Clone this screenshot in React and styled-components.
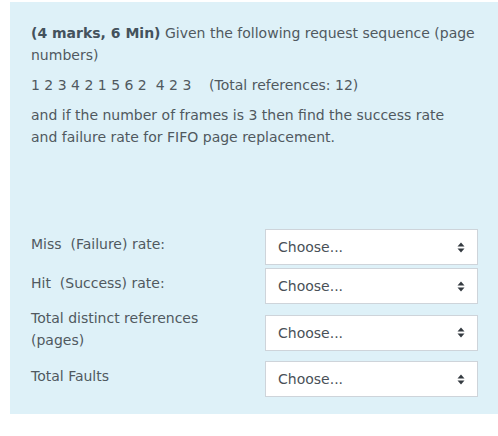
import React from 'react'
import styled, { createGlobalStyle } from 'styled-components'

const GlobalStyle = createGlobalStyle`
    html, body {
        margin: 0;
        padding: 0;
        background: #ffffff;
    }
    body {
        font-family: "DejaVu Sans", Verdana, sans-serif;
        font-size: 14px;
        color: #50595f;
    }
`;

const rows = [
    { label: 'Miss\u00a0 (Failure) rate:' },
    { label: 'Hit\u00a0 (Success) rate:' },
    { label: 'Total distinct references (pages)' },
    { label: 'Total Faults' },
];

function ArrowsIcon() {
    return (
        <svg width="8" height="11" viewBox="0 0 8 11">
            <path d="M4 0.5 L7.5 4.5 H0.5 Z" fill="#343a40" />
            <path d="M4 10.5 L7.5 6.5 H0.5 Z" fill="#343a40" />
        </svg>
    )
}

function App() {
    return (
        <>
            <GlobalStyle />
            <Formulation>
                <QuestionText>
                    <Para>
                        <Marks>(4 marks, 6 Min)</Marks> Given the following request sequence (page numbers)
                    </Para>
                    <Para>
                        1 2 3 4 2 1 5 6 2 &nbsp;4 2 3 &nbsp;&nbsp; (Total references: 12)
                    </Para>
                    <Para>
                        and if the number of frames is 3 then find the success rate<br />
                        and failure rate for FIFO page replacement.
                    </Para>
                </QuestionText>

                <AnswerTable>
                    {rows.map((row) => (
                        <AnswerRow key={row.label}>
                            <Label>{row.label}</Label>
                            <SelectBox>
                                <span>Choose...</span>
                                <ArrowsIcon />
                            </SelectBox>
                        </AnswerRow>
                    ))}
                </AnswerTable>
            </Formulation>
        </>
    )
}

export default App;


const Formulation = styled.div`
    margin: 2px 0 0 10px;
    height: 412px;
    box-sizing: border-box;
    background-color: #def1f8;
    padding: 20px 20px 0 21px;
`;

const QuestionText = styled.div`
    width: 450px;
    line-height: 22px;
`;

const Para = styled.p`
    margin: 0 0 8px 0;
`;

const Marks = styled.b`
    color: #44525c;
`;

const AnswerTable = styled.div`
    margin-top: 79px;
    display: flex;
    flex-direction: column;
`;

const AnswerRow = styled.div`
    display: flex;
    align-items: center;
    padding: 2px 0 1px 0;
`;

const Label = styled.div`
    width: 234px;
    line-height: 22px;
    margin-bottom: 7px;
    padding-right: 40px;
    box-sizing: border-box;
`;

const SelectBox = styled.div`
    width: 213px;
    height: 36px;
    box-sizing: border-box;
    border: 1px solid #ced4da;
    background: #ffffff;
    display: flex;
    align-items: center;
    justify-content: space-between;
    padding: 0 12px 0 12px;
    color: #495057;
    font-size: 14px;
`;
